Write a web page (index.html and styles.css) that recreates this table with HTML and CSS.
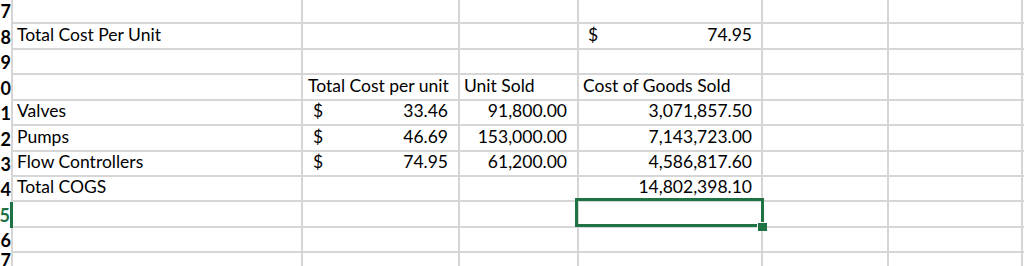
FILE: index.html
```html
<!DOCTYPE html>
<html>
<head>
<meta charset="utf-8">
<link rel="stylesheet" href="styles.css">
</head>
<body>
<div class="sheet">
  <div class="rh">17</div><div class="c"></div><div class="c"></div><div class="c"></div><div class="c"></div><div class="c"></div><div class="c"></div><div class="c"></div>

  <div class="rh">18</div><div class="c txt">Total Cost Per Unit</div><div class="c"></div><div class="c"></div><div class="c acct e"><span>$</span><span>74.95</span></div><div class="c"></div><div class="c"></div><div class="c"></div>

  <div class="rh">19</div><div class="c"></div><div class="c"></div><div class="c"></div><div class="c"></div><div class="c"></div><div class="c"></div><div class="c"></div>

  <div class="rh">20</div><div class="c"></div><div class="c txt hc">Total Cost per unit</div><div class="c txt">Unit Sold</div><div class="c txt">Cost of Goods Sold</div><div class="c"></div><div class="c"></div><div class="c"></div>

  <div class="rh">21</div><div class="c txt">Valves</div><div class="c acct"><span>$</span><span>33.46</span></div><div class="c num">91,800.00</div><div class="c num e">3,071,857.50</div><div class="c"></div><div class="c"></div><div class="c"></div>

  <div class="rh">22</div><div class="c txt">Pumps</div><div class="c acct"><span>$</span><span>46.69</span></div><div class="c num">153,000.00</div><div class="c num e">7,143,723.00</div><div class="c"></div><div class="c"></div><div class="c"></div>

  <div class="rh">23</div><div class="c txt">Flow Controllers</div><div class="c acct"><span>$</span><span>74.95</span></div><div class="c num">61,200.00</div><div class="c num e">4,586,817.60</div><div class="c"></div><div class="c"></div><div class="c"></div>

  <div class="rh">24</div><div class="c txt">Total COGS</div><div class="c"></div><div class="c"></div><div class="c num e">14,802,398.10</div><div class="c"></div><div class="c"></div><div class="c"></div>

  <div class="rh sel">25</div><div class="c"></div><div class="c"></div><div class="c"></div><div class="c active"><div class="selbox"><div class="handle"></div></div></div><div class="c"></div><div class="c"></div><div class="c"></div>

  <div class="rh">26</div><div class="c"></div><div class="c"></div><div class="c"></div><div class="c"></div><div class="c"></div><div class="c"></div><div class="c"></div>

  <div class="rh">27</div><div class="c"></div><div class="c"></div><div class="c"></div><div class="c"></div><div class="c"></div><div class="c"></div><div class="c"></div>
</div>
</body>
</html>
```

FILE: styles.css
```css
html, body {
  margin: 0;
  padding: 0;
  background: #ffffff;
  overflow: hidden;
}

.sheet {
  display: grid;
  grid-template-columns: 13px 290px 157px 119px 184px 126px 134px 40px;
  grid-template-rows: 24px 26px 25px 26px 25px 26px 25px 25px 26px 25px 20px;
  width: 1063px;
  font-family: Lato, "Noto Sans", sans-serif;
  font-size: 17.5px;
  line-height: 20px;
  color: #000000;
}

.rh {
  display: flex;
  justify-content: flex-end;
  align-items: flex-end;
  overflow: hidden;
  border-right: 2px solid #d6d6d6;
  padding: 0 0 3px 0;
  font-weight: 700;
  font-size: 18px;
  white-space: nowrap;
}

.rh.sel {
  color: #1f7244;
  border-right: 3px solid #1f7244;
}

.c {
  display: flex;
  align-items: flex-end;
  border-right: 2px solid #d6d6d6;
  border-bottom: 2px solid #d6d6d6;
  padding: 0 0 3px 0;
  white-space: nowrap;
  min-width: 0;
}

.txt {
  padding-left: 4px;
}

.hc {
  padding-left: 5px;
}

.acct {
  justify-content: space-between;
  padding-left: 10px;
  padding-right: 10px;
}

.num {
  justify-content: flex-end;
  padding-right: 10px;
}

.acct.e {
  padding-left: 9px;
  padding-right: 9px;
}

.num.e {
  padding-right: 9px;
}

.active {
  position: relative;
}

.selbox {
  position: absolute;
  top: -4px;
  left: -4px;
  right: -3px;
  bottom: -1px;
  border: 3px solid #1f7244;
}

.handle {
  position: absolute;
  right: -6px;
  bottom: -7px;
  width: 9px;
  height: 8px;
  background: #1f7244;
  border-top: 1px solid #ffffff;
  border-left: 1px solid #ffffff;
}
```
